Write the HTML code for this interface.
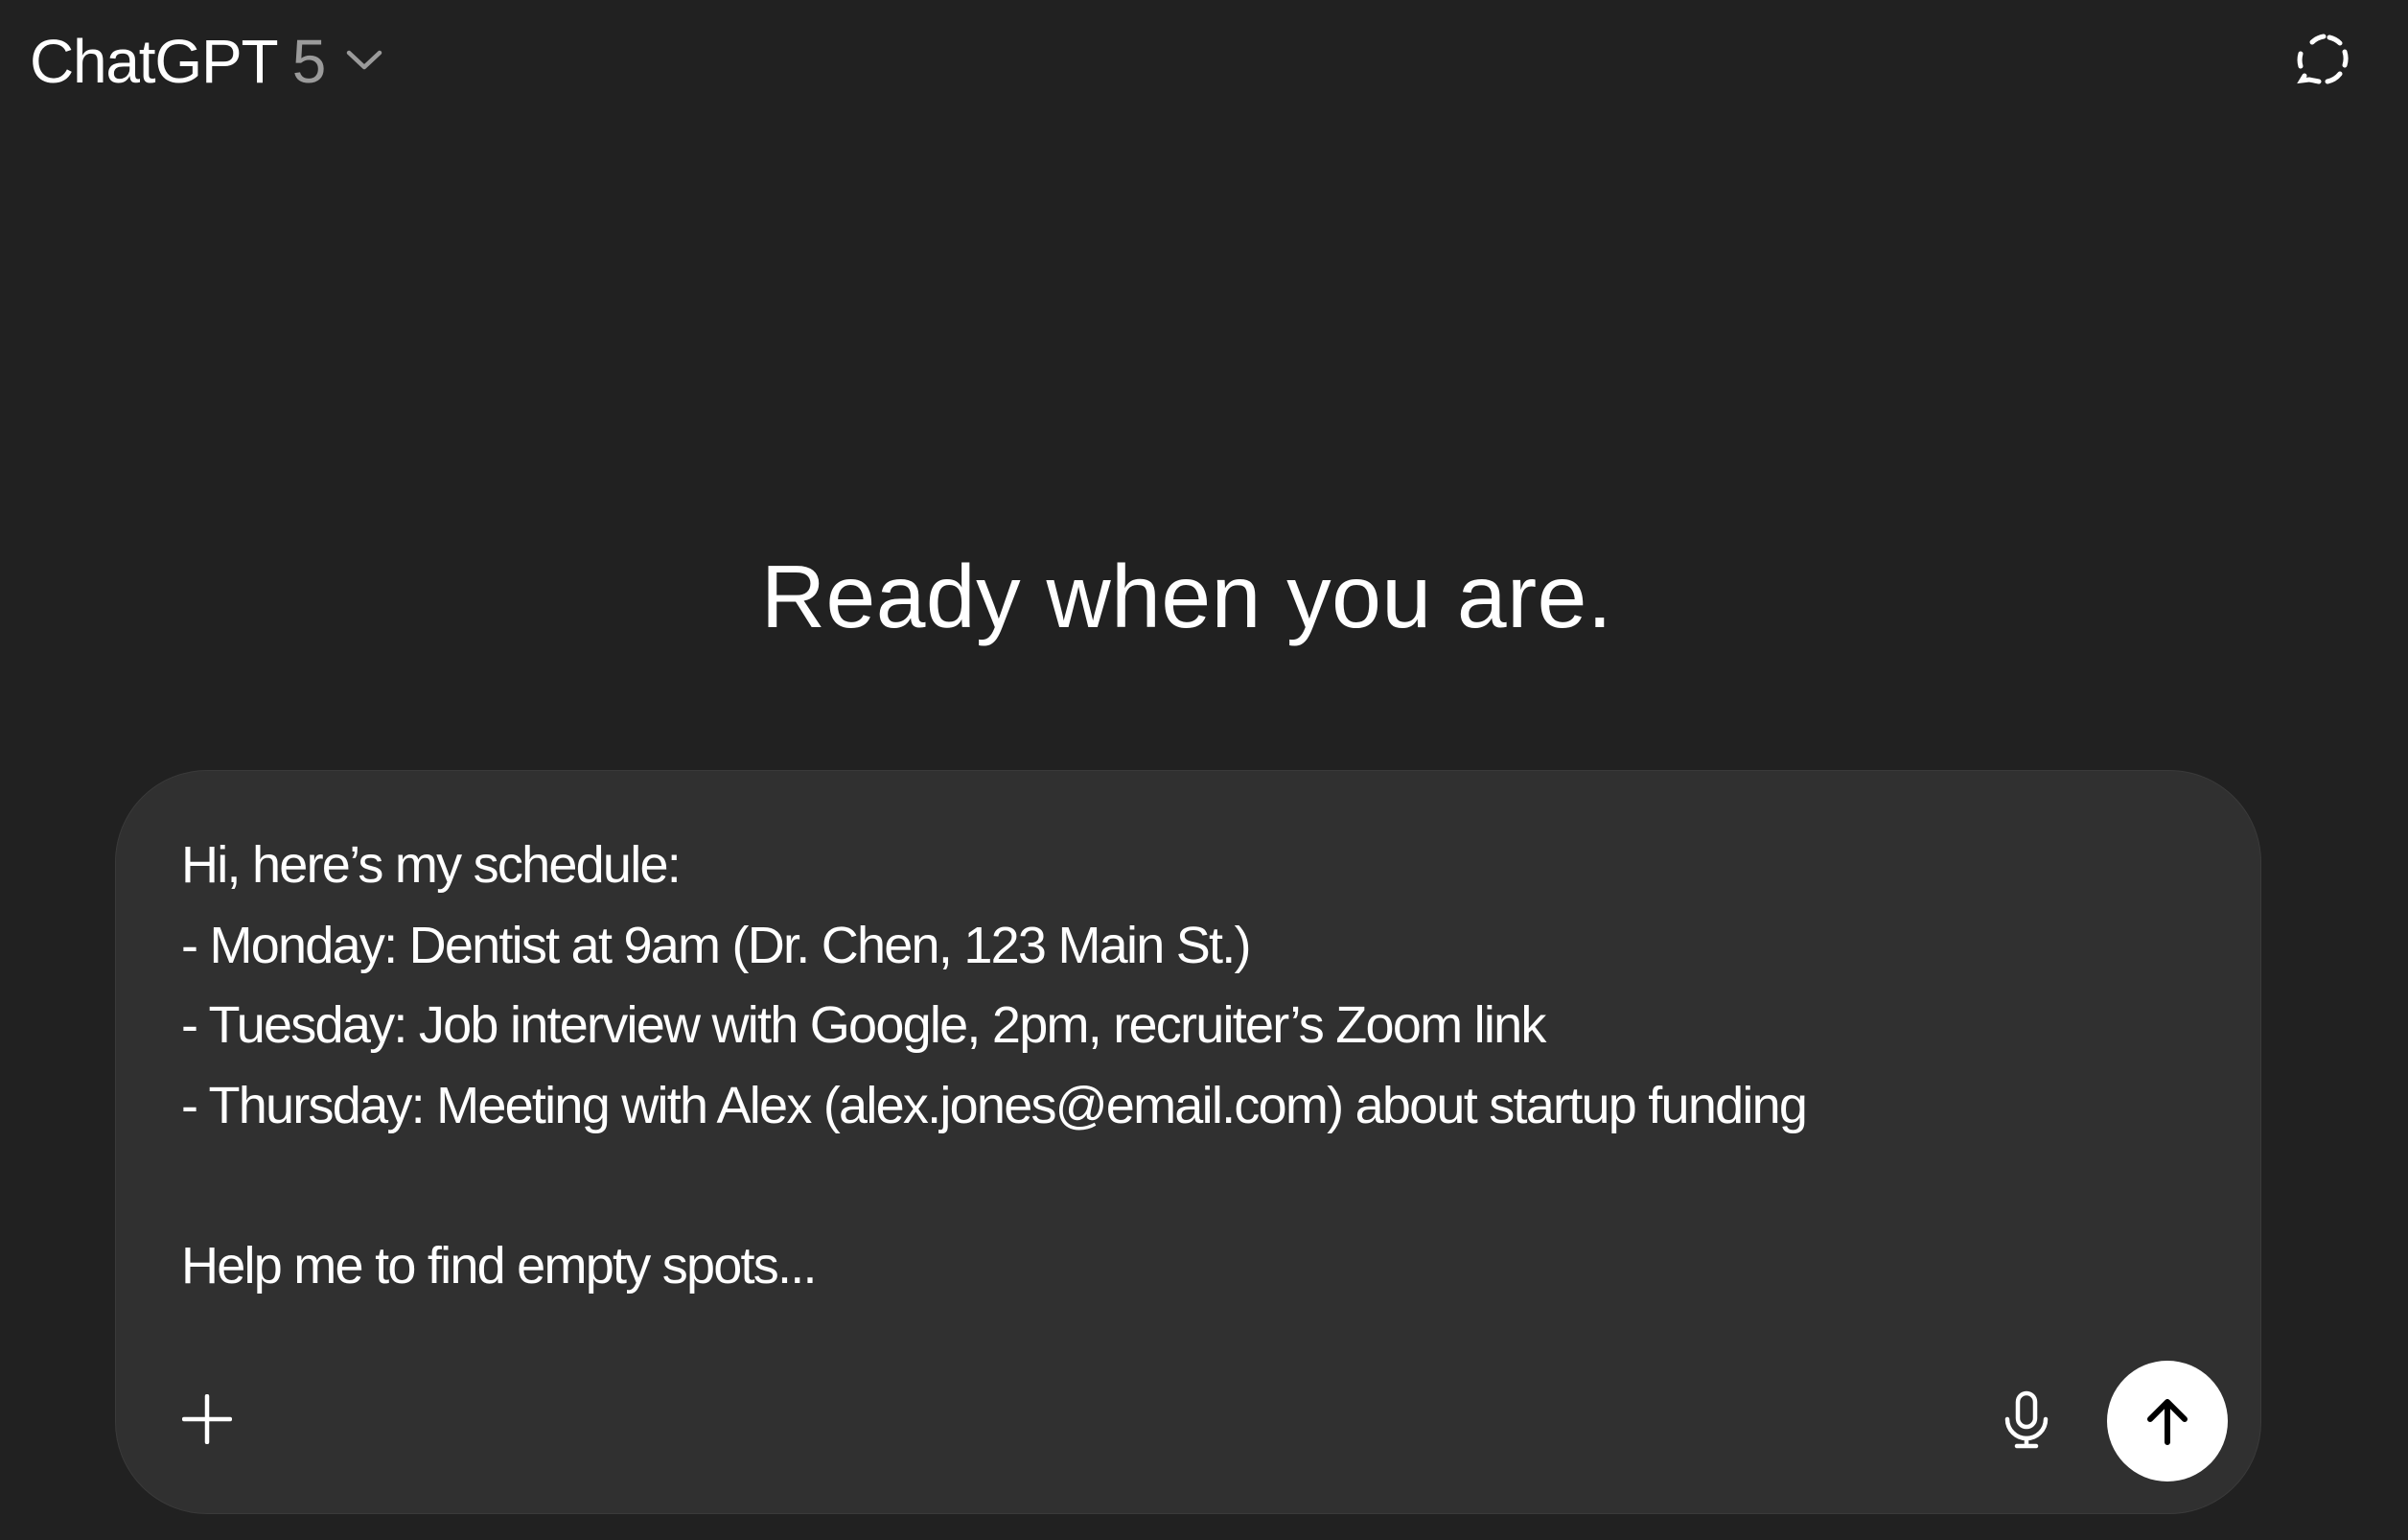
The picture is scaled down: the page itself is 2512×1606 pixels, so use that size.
<!DOCTYPE html>
<html><head><meta charset="utf-8"><style>
html,body{margin:0;padding:0}
body{width:2512px;height:1606px;background:#212121;position:relative;overflow:hidden;font-family:"Liberation Sans",sans-serif;color:#fff}
.title{position:absolute;left:31px;top:24px;font-size:64px;line-height:80px;letter-spacing:-1.2px}
.title span{color:#9b9b9b}
.chev{position:absolute;left:360px;top:50px}
.h{position:absolute;left:-18px;width:2512px;top:562px;text-align:center;font-size:93px;line-height:120px;letter-spacing:0.5px}
.box{position:absolute;left:120px;top:803px;width:2239px;height:776px;background:#303030;border:1px solid #3a3a3a;border-radius:96px;box-sizing:border-box}
.txt{position:absolute;left:189px;top:861px;font-size:54px;line-height:83.5px;letter-spacing:-1.75px;white-space:pre}
.send{position:absolute;left:2198px;top:1419px;width:126px;height:126px;border-radius:50%;background:#fff}
</style></head><body>
<div class="title">ChatGPT <span>5</span></div>
<svg class="chev" width="40" height="26" viewBox="0 0 40 26"><path d="M4 5 L20 20 L36 5" fill="none" stroke="#9b9b9b" stroke-width="4.5" stroke-linecap="round" stroke-linejoin="round"/></svg>
<svg style="position:absolute;left:2390px;top:30px" width="64" height="64" viewBox="0 0 64 64"><g fill="none" stroke="#fff" stroke-width="5" stroke-linecap="round">
<path d="M22 14 A23 23 0 0 1 34 8"/><path d="M40 9 A23 23 0 0 1 51 15"/><path d="M56 24 A23 23 0 0 1 56 38"/><path d="M51 47 A23 23 0 0 1 38 55"/><path d="M29 55 L19 53 L11 54 L14 49"/><path d="M10 39 A23 23 0 0 1 10 26"/></g></svg>
<div class="h">Ready when you are.</div>
<div class="box"></div>
<div class="txt">Hi, here’s my schedule:
- Monday: Dentist at 9am (Dr. Chen, 123 Main St.)
- Tuesday: Job interview with Google, 2pm, recruiter’s Zoom link
- Thursday: Meeting with Alex (alex.jones@email.com) about startup funding

Help me to find empty spots...</div>
<svg style="position:absolute;left:190px;top:1454px" width="52" height="52" viewBox="0 0 52 52"><path d="M26 2 V50 M2 26 H50" stroke="#fff" stroke-width="4.5" stroke-linecap="round"/></svg>
<svg style="position:absolute;left:2090px;top:1450px" width="48" height="62" viewBox="0 0 48 62"><g fill="none" stroke="#fff" stroke-width="4.5" stroke-linecap="round"><rect x="15" y="3" width="18" height="35" rx="9"/><path d="M4 30 A20 20 0 0 0 44 30"/><path d="M24 50 V58 M14 58 H34"/></g></svg>
<div class="send"></div>
<svg style="position:absolute;left:2231px;top:1452px" width="60" height="60" viewBox="0 0 60 60"><path d="M30 52 V10 M12 28 L30 10 L48 28" fill="none" stroke="#000" stroke-width="6" stroke-linecap="round" stroke-linejoin="round"/></svg>
</body></html>
